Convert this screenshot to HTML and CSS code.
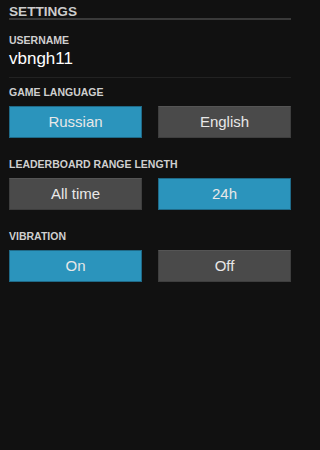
FILE: index.html
```html
<!DOCTYPE html>
<html>
<head>
<meta charset="utf-8">
<link rel="stylesheet" href="styles.css">
</head>
<body>
<div class="page">
  <h1 class="title">SETTINGS</h1>
  <div class="user">
    <div class="label">USERNAME</div>
    <div class="value">vbngh11</div>
  </div>
  <div class="section">
    <div class="label">GAME LANGUAGE</div>
    <div class="row">
      <div class="btn active">Russian</div>
      <div class="btn">English</div>
    </div>
  </div>
  <div class="section">
    <div class="label">LEADERBOARD RANGE LENGTH</div>
    <div class="row">
      <div class="btn">All time</div>
      <div class="btn active">24h</div>
    </div>
  </div>
  <div class="section">
    <div class="label">VIBRATION</div>
    <div class="row">
      <div class="btn active">On</div>
      <div class="btn">Off</div>
    </div>
  </div>
</div>
</body>
</html>
```
FILE: styles.css
```css
html, body {
  margin: 0;
  background: #111111;
  height: 100%;
}
body {
  font-family: "Liberation Sans", Arial, sans-serif;
}
.page {
  width: 282px;
  padding: 0 9px;
}
.title {
  margin: 0;
  padding-top: 5px;
  font-size: 13.6px;
  line-height: 13px;
  font-weight: bold;
  color: #cccccc;
  border-bottom: 2px solid #3a3a3a;
}
.user {
  padding: 14px 0 8px;
  border-bottom: 1px solid #222222;
}
.label {
  font-size: 10.5px;
  line-height: 12px;
  font-weight: bold;
  color: #cfcfcf;
}
.value {
  margin-top: 3px;
  font-size: 17px;
  line-height: 20px;
  color: #ffffff;
}
.section {
  padding-top: 8px;
  padding-bottom: 12px;
}
.section .label {
  margin-bottom: 8px;
}
.row {
  display: flex;
  gap: 16px;
}
.btn {
  flex: 1;
  height: 30px;
  line-height: 30px;
  text-align: center;
  font-size: 15px;
  color: #e8e8e8;
  background: #4a4a4a;
  border: 1px solid #3e3e3e;
  border-top-color: #555555;
}
.btn.active {
  background: #2b94bc;
  border-color: #1f6a88;
}
```
